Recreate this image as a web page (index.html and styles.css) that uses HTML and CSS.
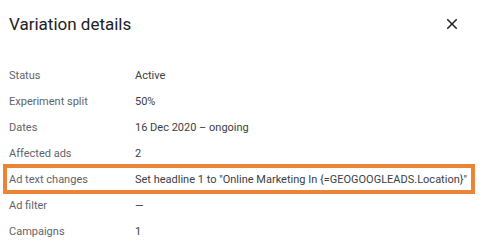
FILE: index.html
```html
<!DOCTYPE html>
<html lang="en">
<head>
  <meta charset="UTF-8">
  <meta name="viewport" content="width=device-width, initial-scale=1.0">
  <title>Variation details</title>
  <link rel="stylesheet" href="styles.css">
</head>
<body>

  <div class="dialog">
    <!-- Header -->
    <div class="header">
      <h2>Variation details</h2>
      <button class="close" aria-label="Close">
        <svg viewBox="0 0 24 24" width="18" height="18">
          <path d="M19 6.41 17.59 5 12 10.59 6.41 5 5 6.41 10.59 12 5 17.59 6.41 19 12 13.41 17.59 19 19 17.59 13.41 12z" fill="#202124"/>
        </svg>
      </button>
    </div>

    <!-- Details -->
    <div class="rows">
      <div class="row"><span class="label">Status</span><span class="value">Active</span></div>
      <div class="row"><span class="label">Experiment split</span><span class="value">50%</span></div>
      <div class="row"><span class="label">Dates</span><span class="value">16 Dec 2020 – ongoing</span></div>
      <div class="row"><span class="label">Affected ads</span><span class="value">2</span></div>
      <div class="row highlight"><span class="label">Ad text changes</span><span class="value">Set headline 1 to "Online Marketing In {=GEOGOOGLEADS.Location}"</span></div>
      <div class="row"><span class="label">Ad filter</span><span class="value">—</span></div>
      <div class="row"><span class="label">Campaigns</span><span class="value">1</span></div>
    </div>
  </div>

</body>
</html>
```

FILE: styles.css
```css
body {
  font-family: Roboto, Arial, sans-serif;
  margin: 0;
  padding: 0;
  background-color: #ffffff;
}

.dialog {
  width: 483px;
}

.header {
  display: flex;
  align-items: center;
  justify-content: space-between;
  height: 48px;
  padding: 0 22px 0 9px;
}

h2 {
  margin: 0;
  font-size: 17px;
  font-weight: 400;
  color: #202124;
}

.close {
  display: flex;
  padding: 0;
  border: none;
  background: none;
  cursor: pointer;
}

.rows {
  padding-top: 14px;
}

.row {
  display: flex;
  box-sizing: border-box;
  height: 26px;
  align-items: center;
  padding-left: 9px;
  font-size: 11px;
  white-space: nowrap;
}

.label {
  width: 126px;
  flex-shrink: 0;
  color: #5f6368;
}

.value {
  color: #3c4043;
}

.highlight {
  height: 30px;
  border: 4px solid #ec8436;
  margin: -2px 8px -2px 3px;
  padding-left: 2px;
}
```
